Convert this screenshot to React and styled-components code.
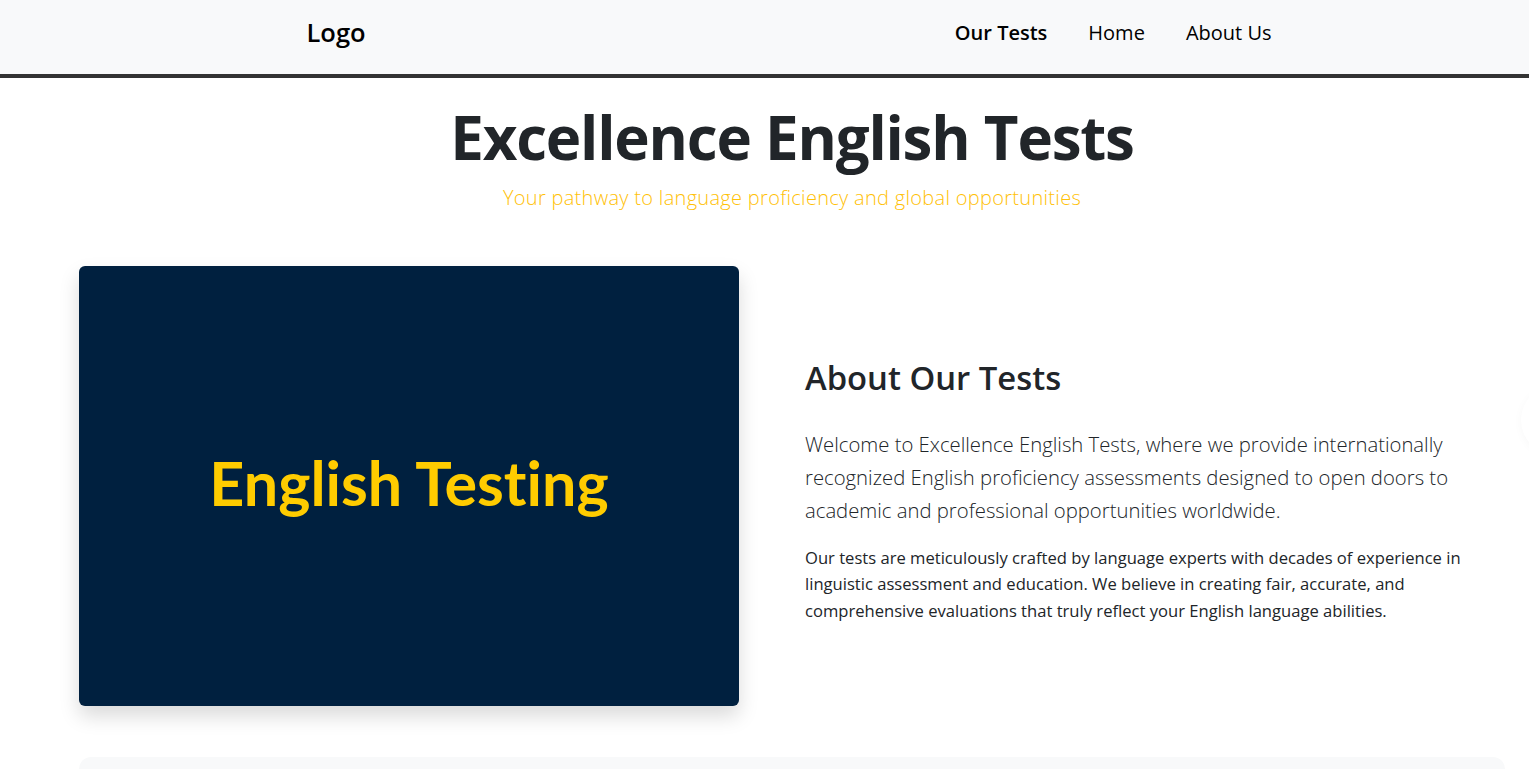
import React from 'react';
import styled, { createGlobalStyle } from 'styled-components';

const GlobalStyle = createGlobalStyle`
  body {
    margin: 0;
    background: #ffffff;
    font-family: "Segoe UI", "Open Sans", "Noto Sans", sans-serif;
    color: #212529;
    overflow: hidden;
  }
`;

const NavBar = styled.nav`
  height: 74px;
  background: #f8f9fa;
  border-bottom: 4px solid #333333;
`;

const NavInner = styled.div`
  width: 1000px;
  height: 100%;
  margin: 0 auto;
  padding: 0 20px 10px 15px;
  box-sizing: border-box;
  display: flex;
  align-items: center;
  justify-content: space-between;
  transform: translateX(27px);
`;

const Logo = styled.div`
  font-size: 25.5px;
  font-weight: 600;
  color: #000;
`;

const NavLinks = styled.ul`
  display: flex;
  gap: 41px;
  margin: 0;
  padding: 0;
  list-style: none;
`;

const NavLink = styled.li`
  font-size: 20px;
  font-weight: ${(p) => (p.active ? 600 : 400)};
  color: #000;
`;

const Main = styled.main`
  padding: 0 24px 0 79px;
`;

const Hero = styled.header`
  text-align: center;
  padding-top: 22px;
`;

const Title = styled.h1`
  margin: 0;
  font-size: 60px;
  font-weight: 700;
  letter-spacing: -1.2px;
  line-height: 1.25;
  color: #212529;
`;

const Subtitle = styled.p`
  margin: 9px 0 0;
  font-size: 20px;
  font-weight: 300;
  letter-spacing: 0.3px;
  color: #ffc107;
`;

const AboutRow = styled.section`
  display: grid;
  grid-template-columns: 660px 1fr;
  column-gap: 66px;
  align-items: center;
  margin-top: 55px;
`;

const Banner = styled.div`
  height: 440px;
  background: #00203f;
  border-radius: 6px;
  box-shadow: 0 10px 20px rgba(0, 0, 0, 0.15);
  display: flex;
  align-items: center;
  justify-content: center;
`;

const BannerText = styled.span`
  font-family: Lato, "Open Sans", sans-serif;
  font-weight: 700;
  font-size: 61px;
  font-variant-ligatures: none;
  color: #ffcc00;
  transform: translateY(-4px);
`;

const AboutText = styled.div`
  padding: 10px 40px 0 0;
`;

const AboutTitle = styled.h2`
  margin: 0 0 31px;
  font-size: 32.8px;
  font-weight: 600;
  line-height: 1.2;
  color: #212529;
`;

const Lead = styled.p`
  margin: 0 0 18px;
  font-size: 20.3px;
  font-weight: 300;
  line-height: 33px;
  color: #212529;
`;

const Body = styled.p`
  margin: 0;
  font-size: 16.6px;
  line-height: 26.5px;
  color: #212529;
`;

const Panel = styled.div`
  margin-top: 51px;
  height: 80px;
  background: #f8f9fa;
  border-radius: 12px;
`;

const EdgeShadow = styled.div`
  position: absolute;
  right: -62px;
  top: 385px;
  width: 70px;
  height: 70px;
  border-radius: 50%;
  background: #fff;
  box-shadow: 0 2px 10px rgba(0, 0, 0, 0.03);
`;

export default function App() {
  return (
    <>
      <GlobalStyle />
      <NavBar>
        <NavInner>
          <Logo>Logo</Logo>
          <NavLinks>
            <NavLink active>Our Tests</NavLink>
            <NavLink>Home</NavLink>
            <NavLink>About Us</NavLink>
          </NavLinks>
        </NavInner>
      </NavBar>
      <Main>
        <Hero>
          <Title>Excellence English Tests</Title>
          <Subtitle>Your pathway to language proficiency and global opportunities</Subtitle>
        </Hero>
        <AboutRow>
          <Banner>
            <BannerText>English Testing</BannerText>
          </Banner>
          <AboutText>
            <AboutTitle>About Our Tests</AboutTitle>
            <Lead>
              Welcome to Excellence English Tests, where we provide internationally recognized English
              proficiency assessments designed to open doors to academic and professional opportunities
              worldwide.
            </Lead>
            <Body>
              Our tests are meticulously crafted by language experts with decades of experience in
              linguistic assessment and education. We believe in creating fair, accurate, and
              comprehensive evaluations that truly reflect your English language abilities.
            </Body>
          </AboutText>
        </AboutRow>
        <Panel />
      </Main>
      <EdgeShadow />
    </>
  );
}
